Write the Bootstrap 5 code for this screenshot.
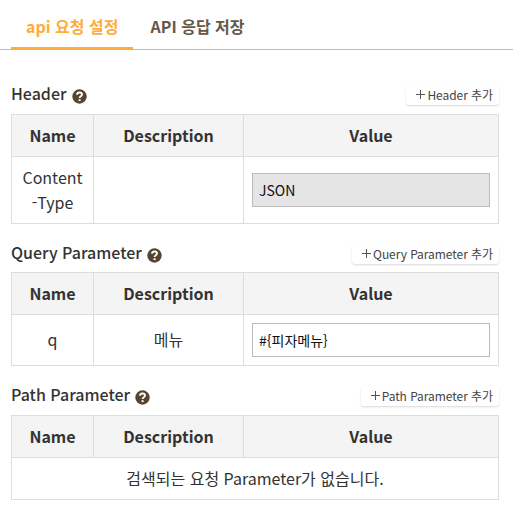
<!DOCTYPE html>
<html lang="ko">
<head>
<meta charset="utf-8">
<meta name="viewport" content="width=device-width, initial-scale=1">
<title>API</title>
<link href="https://cdn.jsdelivr.net/npm/bootstrap@5.3.0/dist/css/bootstrap.min.css" rel="stylesheet">
<style>
body{font-family:"Noto Sans CJK KR",sans-serif;font-size:16px;line-height:25px;color:#333;background:#fff;overflow:hidden}
.api-tabs{height:50px;padding-left:11px;border-bottom:1px solid #bbb}
.api-tabs .nav-link{height:50px;padding:14px 15px 0;border:0;border-bottom:3px solid transparent;border-radius:0;color:#665847;font-weight:700;line-height:25px;white-space:nowrap}
.api-tabs .nav-link.active{color:#ffac3a;border-bottom-color:#ffac3a;background:none;width:122px}
.api-tabs .nav-item+.nav-item{margin-left:2.5px}
.api-section{width:488px;margin-left:11px}
.sec-head{height:30px}
.sec-head h2{height:17px;font-size:16px;font-weight:500;line-height:16px;gap:5px;color:#333}
.sec-first{margin-top:34px}
.sec-second{margin-top:19px}
.sec-third{margin-top:19px}
.sec-second .sec-head{height:29px}
.help-icon{width:15px;height:15px;margin-top:4px;margin-bottom:-3px}
.add-btn{height:20px;margin-top:1px;padding:0 6px 0 9px;border:0;border-radius:3px;font-size:12px;line-height:19px;letter-spacing:-.06px;color:#444;background:#fff;box-shadow:0 1px 2px rgba(0,0,0,.15);gap:3px}
.add-btn svg{width:9px;height:9px;margin:0 -1px 1px 1px}
.add-btn span{margin-top:-1px}
.api-table{table-layout:fixed;width:488px;border-collapse:collapse;color:#333;border-color:#ddd}
.api-table th{background:#f4f4f4;font-weight:700}
.api-table th,.api-table td{padding:8px;border:1px solid #ddd;line-height:25px}
.api-table .c-name{width:82px}
.api-table .c-desc{width:150px}
.sec-second td:not(:last-child){padding-bottom:10px}
.api-table .form-control{height:34px;padding:0 6px;border:1px solid #bbb;border-radius:0;font-size:14px;line-height:32px;color:#111}
.api-table .form-control:disabled{background:#e5e5e5}
</style>
</head>
<body>
<svg class="d-none" xmlns="http://www.w3.org/2000/svg">
<symbol id="help" viewBox="0 0 15 15"><circle cx="7.5" cy="7.5" r="7.2" fill="#55452f"/><path d="M5 5.7C5.1 4.2 6.1 3.5 7.5 3.5s2.5.8 2.5 2.1c0 1.7-2.4 1.6-2.4 3.4" fill="none" stroke="#fff" stroke-width="1.9"/><rect x="6.6" y="10.2" width="2" height="1.9" fill="#fff"/></symbol>
<symbol id="plus" viewBox="0 0 9 9"><path d="M4.5 0v9M0 4.5h9" stroke="#555" stroke-width="1"/></symbol>
</svg>
<ul class="nav flex-nowrap api-tabs">
<li class="nav-item"><a class="nav-link active" href="#">api 요청 설정</a></li>
<li class="nav-item"><a class="nav-link" href="#">API 응답 저장</a></li>
</ul>

<section class="api-section sec-first">
<div class="sec-head d-flex justify-content-between align-items-start">
<h2 class="d-flex align-items-center m-0">Header <svg class="help-icon"><use href="#help"/></svg></h2>
<button class="btn add-btn d-flex align-items-center" type="button"><svg><use href="#plus"/></svg><span>Header 추가</span></button>
</div>
<table class="api-table text-center align-middle">
<colgroup><col class="c-name"><col class="c-desc"><col></colgroup>
<thead><tr><th>Name</th><th>Description</th><th>Value</th></tr></thead>
<tbody><tr><td>Content<br>-Type</td><td></td><td><input class="form-control" value="JSON" disabled></td></tr></tbody>
</table>
</section>

<section class="api-section sec-second">
<div class="sec-head d-flex justify-content-between align-items-start">
<h2 class="d-flex align-items-center m-0">Query Parameter <svg class="help-icon"><use href="#help"/></svg></h2>
<button class="btn add-btn d-flex align-items-center" type="button"><svg><use href="#plus"/></svg><span>Query Parameter 추가</span></button>
</div>
<table class="api-table text-center align-middle">
<colgroup><col class="c-name"><col class="c-desc"><col></colgroup>
<thead><tr><th>Name</th><th>Description</th><th>Value</th></tr></thead>
<tbody><tr><td>q</td><td>메뉴</td><td><input class="form-control" value="#{피자메뉴}"></td></tr></tbody>
</table>
</section>

<section class="api-section sec-third">
<div class="sec-head d-flex justify-content-between align-items-start">
<h2 class="d-flex align-items-center m-0">Path Parameter <svg class="help-icon"><use href="#help"/></svg></h2>
<button class="btn add-btn d-flex align-items-center" type="button"><svg><use href="#plus"/></svg><span>Path Parameter 추가</span></button>
</div>
<table class="api-table text-center align-middle">
<colgroup><col class="c-name"><col class="c-desc"><col></colgroup>
<thead><tr><th>Name</th><th>Description</th><th>Value</th></tr></thead>
<tbody><tr><td colspan="3">검색되는 요청 Parameter가 없습니다.</td></tr></tbody>
</table>
</section>
<script src="https://cdn.jsdelivr.net/npm/bootstrap@5.3.0/dist/js/bootstrap.bundle.min.js"></script>
</body>
</html>
